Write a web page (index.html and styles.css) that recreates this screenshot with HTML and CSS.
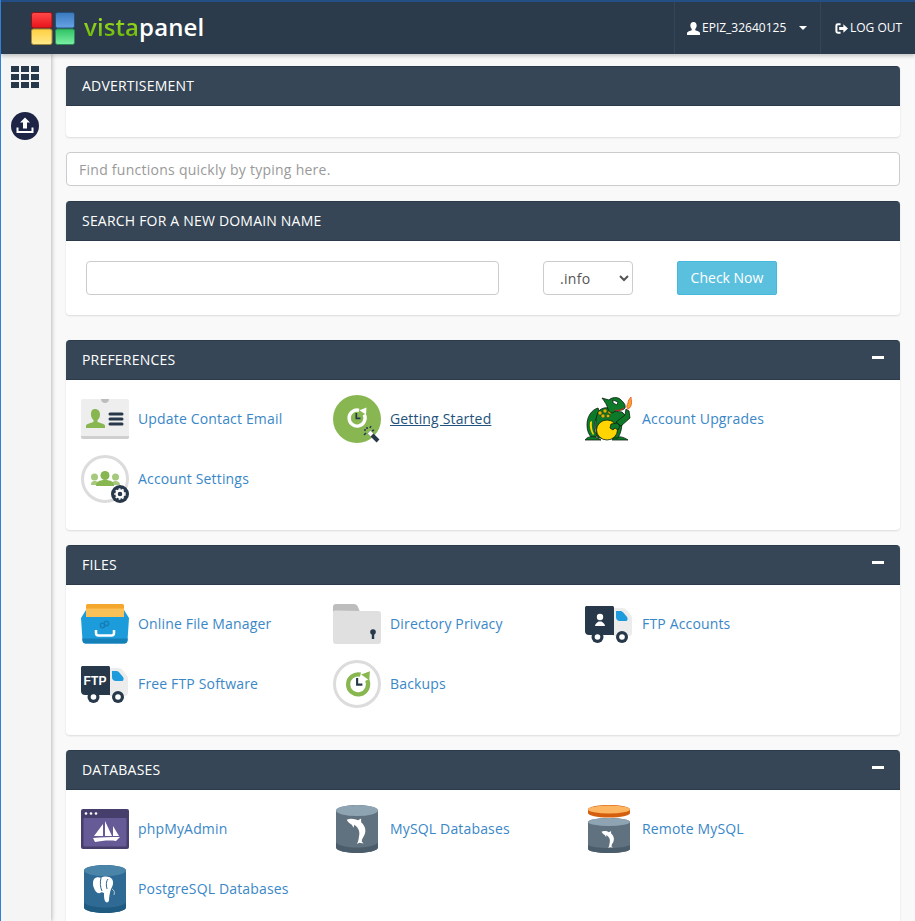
FILE: index.html
```html
<!DOCTYPE html>
<html lang="en">
<head>
<meta charset="utf-8">
<title>vistapanel</title>
<link rel="stylesheet" href="styles.css">
</head>
<body>
<svg class="defs" width="0" height="0" aria-hidden="true">
  <defs>
    <symbol id="clock" viewBox="0 0 24 24">
      <path d="M19.300 9.600A8 8 0 1 1 14 5.300" fill="none" stroke="currentColor" stroke-width="3.400"/>
      <path d="M14.500 5.200L21.500 2.500 21 9.800z" fill="currentColor"/>
      <path d="M11.300 8v5.300h4.200" fill="none" stroke="#27384a" stroke-width="1.700"/>
    </symbol>
    <symbol id="truck" viewBox="0 0 48 48">
      <path d="M28 8h9c2 0 3.500 .7 5 2.500l4 5c.7 1 1 2 1 3.500v14c0 2-1 3-3 3H28z" fill="#ececec"/>
      <path d="M31 11h4c1.500 0 2.500 .5 3.500 1.700l3.500 4.300c1 1.500 .6 4-1 4H35c-2.500 0-4-1.500-4-4z" fill="#1e9bdc"/>
      <path d="M2 6h25c1.500 0 2 .5 2 2v27H4c-2.500 0-4-1.500-4-4V8c0-1.500 .7-2 2-2z" fill="#27384a"/>
      <circle cx="12.500" cy="37" r="6" fill="#27384a"/><circle cx="12.500" cy="37" r="2.800" fill="#fff"/>
      <circle cx="37" cy="37" r="6" fill="#27384a"/><circle cx="37" cy="37" r="2.800" fill="#fff"/>
    </symbol>
    <symbol id="dolphin" viewBox="0 0 48 48">
      <path d="M6 9C12 6 20 8 24 10L29 7V13C35 18 38 26 34 34 32 38 30 40 30 44L33 47 26 46 22 48C25 44 25 38 26 33 27 27 24 21 18 17L17 22 14 17C11 15 8 13 6 9z" fill="#fff"/>
    </symbol>
    <symbol id="can" viewBox="0 0 42 48">
      <path d="M0 5.500C0 2.500 10 0 21 0s21 2.500 21 5.500v37C42 45.500 32 48 21 48S0 45.500 0 42.500z" fill="var(--side)"/>
      <ellipse cx="21" cy="5.500" rx="21" ry="5.500" fill="var(--top)"/>
      <path d="M0 37.500C3 41 11 42.500 21 42.500S39 41 42 37.500v5C42 45.500 32 48 21 48S0 45.500 0 42.500z" fill="var(--base)"/>
    </symbol>
  </defs>
</svg>

<header class="topbar">
  <div class="brand">
    <svg class="brand-mark" viewBox="0 0 44 33" aria-hidden="true">
      <defs>
        <linearGradient id="lr" x1="0" y1="0" x2="0" y2="1"><stop offset="0" stop-color="#ff4a4a"/><stop offset="1" stop-color="#e8121a"/></linearGradient>
        <linearGradient id="lb" x1="0" y1="0" x2="0" y2="1"><stop offset="0" stop-color="#3a78bc"/><stop offset="1" stop-color="#66a4e6"/></linearGradient>
        <linearGradient id="ly" x1="0" y1="0" x2="0" y2="1"><stop offset="0" stop-color="#ffcf3f"/><stop offset="1" stop-color="#ffea8c"/></linearGradient>
        <linearGradient id="lg" x1="0" y1="0" x2="0" y2="1"><stop offset="0" stop-color="#2fc263"/><stop offset="1" stop-color="#7cf0a4"/></linearGradient>
      </defs>
      <rect x=".5" y=".5" width="20.500" height="15.500" rx="2" fill="url(#lr)" stroke="#8c1418"/>
      <rect x="24.500" y=".5" width="19" height="15.500" rx="2" fill="url(#lb)" stroke="#23507f"/>
      <rect x=".5" y="17" width="20.500" height="15.500" rx="2" fill="url(#ly)" stroke="#a58a3a"/>
      <rect x="24.500" y="17" width="19" height="15.500" rx="2" fill="url(#lg)" stroke="#2b8a55"/>
    </svg>
    <span class="brand-name"><span class="brand-vista">vista</span>panel</span>
  </div>
  <nav class="topnav">
    <a class="topnav-item user-item">
      <svg class="top-icon" viewBox="0 0 14 14" aria-hidden="true"><path d="M7 0c2.300 0 3.400 1.700 3.400 3.800 0 1.500-.6 3-1.500 3.800v1.200c1.800.8 4.600 1.400 5.100 2.700V14H0v-2.500c.5-1.300 3.300-1.900 5.100-2.700V7.600C4.200 6.800 3.600 5.300 3.600 3.800 3.600 1.700 4.700 0 7 0z" fill="#fff"/></svg>
      <span>EPIZ_32640125</span>
      <span class="caret"></span>
    </a>
    <a class="topnav-item logout-item">
      <svg class="top-icon" viewBox="0 0 14 14" aria-hidden="true"><path d="M6 2.500H3C2 2.500 1.500 3 1.500 4v6c0 1 .5 1.500 1.500 1.500h3" fill="none" stroke="#fff" stroke-width="2.200"/><path d="M4.500 5.500h4.500V2.500L14 7l-5 4.500v-3H4.500z" fill="#fff"/></svg>
      <span>LOG OUT</span>
    </a>
  </nav>
</header>

<div class="shell">
  <aside class="sidebar">
    <svg class="side-grid" viewBox="0 0 28 22" aria-hidden="true">
      <g fill="#27384a">
        <rect x="0" y="0" width="8" height="6"/><rect x="10" y="0" width="8" height="6"/><rect x="20" y="0" width="8" height="6"/>
        <rect x="0" y="8" width="8" height="6"/><rect x="10" y="8" width="8" height="6"/><rect x="20" y="8" width="8" height="6"/>
        <rect x="0" y="16" width="8" height="6"/><rect x="10" y="16" width="8" height="6"/><rect x="20" y="16" width="8" height="6"/>
      </g>
    </svg>
    <svg class="side-upload" viewBox="0 0 28 28" aria-hidden="true">
      <circle cx="14" cy="14" r="14" fill="#1d2445"/>
      <path d="M14 5.500l5 5h-3v6h-4v-6H9z" fill="#fff"/>
      <path d="M6.500 15.500v4.500h15v-4.500" fill="none" stroke="#fff" stroke-width="2"/>
    </svg>
  </aside>

  <main class="content">
    <section class="panel">
      <div class="panel-head">ADVERTISEMENT</div>
      <div class="ad-body"></div>
    </section>

    <input class="finder" type="text" placeholder="Find functions quickly by typing here.">

    <section class="panel">
      <div class="panel-head">SEARCH FOR A NEW DOMAIN NAME</div>
      <form class="domain-form">
        <input class="domain-input" type="text">
        <select class="domain-tld"><option>.info</option></select>
        <button class="check-btn" type="button">Check Now</button>
      </form>
    </section>

    <section class="panel group">
      <div class="panel-head"><span>PREFERENCES</span><span class="minus"></span></div>
      <div class="items">
        <a class="item">
          <svg class="ico" viewBox="0 0 48 48" aria-hidden="true">
            <rect x="0" y="4" width="48" height="40" rx="2" fill="#eeeeee"/>
            <path d="M0 41h48v1c0 1.200-.8 2-2 2H2c-1.200 0-2-.8-2-2z" fill="#cfcfcf"/>
            <path d="M20 4h8c0 2-1.500 4-4 4s-4-2-4-4z" fill="#bdbdbd"/>
            <path d="M14 14c3 0 5 2.200 5 5.500 0 2.500-1 4.500-2.500 5.500v2c2.500 1 6.500 1.500 7.500 3.500V33H5v-2.500c1-2 5-2.500 7.500-3.500v-2C11 24 10 22 10 19.500c0-3.300 1-5.500 4-5.500z" fill="#88b651"/>
            <path d="M29 19h12M29 24h12M29 29h12" stroke="#27384a" stroke-width="3" stroke-linecap="round"/>
          </svg>
          <span>Update Contact Email</span>
        </a>
        <a class="item item-hover">
          <svg class="ico" viewBox="0 0 48 48" aria-hidden="true">
            <circle cx="24" cy="24" r="24" fill="#88b651"/>
            <use href="#clock" x="12" y="10" width="24" height="24" color="#fff"/>
            <path d="M36 37l9 9" stroke="#27384a" stroke-width="4"/>
            <path d="M36 37l3 3" stroke="#fff" stroke-width="4"/>
            <path d="M34 32v2M31 35h2M31 40l2-2M38 31l-1 2M41 35l-2 1" stroke="#27384a" stroke-width="1.500"/>
          </svg>
          <span>Getting Started</span>
        </a>
        <a class="item">
          <svg class="ico" viewBox="0 0 48 48" aria-hidden="true">
            <path d="M13 13C6 15 2 22 2 30 2 36 4 40 7 43L12 41C8 35 8 25 15 18z" fill="#0d7a2a" stroke="#0c1f0e" stroke-width=".8"/>
            <path d="M5 27c-.5 4 0 9 3 13l1-1C7 35 6.500 31 7 26z" fill="#ffd400"/>
            <path d="M0 45c2-3 6-4 10-3l6 3zM29 42c5-1 10 0 14 3H27z" fill="#0d7a2a" stroke="#0c1f0e" stroke-width=".8"/>
            <path d="M12 20C13 14 19 12 24 13L28 16 37 17C40 20 42 22 43 24L37 27C37 32 36 38 33 43H13C10 36 10 28 12 20z" fill="#0d7a2a" stroke="#0c1f0e" stroke-width=".8"/>
            <ellipse cx="22" cy="35" rx="10.500" ry="10" fill="#ffd400" stroke="#0c1f0e" stroke-width=".8"/>
            <g fill="#e0b400" stroke="#0c1f0e" stroke-width=".4"><circle cx="15" cy="18" r="2"/><circle cx="20" cy="16" r="2"/><circle cx="25" cy="17" r="2"/><circle cx="18" cy="21" r="2"/><circle cx="23" cy="21" r="1.800"/></g>
            <path d="M17 3L24 5C27 2 32 2 35 4 38 7 41 9 40 13 38 16 33 15 30 16 28 19 24 18 23 14 22 10 20 7 17 3z" fill="#0d7a2a" stroke="#0c1f0e" stroke-width=".8"/>
            <path d="M28 5l5 2-1 3-4-2z" fill="#fff" stroke="#0c1f0e" stroke-width=".8"/>
            <path d="M30 15c3 1 7 0 9-2" fill="none" stroke="#d8241c" stroke-width="1"/>
            <path d="M31 27L40 20 41 14 44 16 45 23 36 31z" fill="#0d7a2a" stroke="#0c1f0e" stroke-width=".8"/>
            <path d="M26 29l6-1 3 3-2 4-3-2-2 2-3-2z" fill="#0d7a2a" stroke="#0c1f0e" stroke-width=".8"/>
            <path d="M43 14c-2-2-1-4 0-6 0-2 1-4 3-6 0 2 .6 3 .6 5 0 3-1 6-3.600 7z" fill="#f5a623" stroke="#e8412a" stroke-width=".7"/>
          </svg>
          <span>Account Upgrades</span>
        </a>
        <a class="item">
          <svg class="ico" viewBox="0 0 48 48" aria-hidden="true">
            <circle cx="24" cy="24" r="22.500" fill="#fff" stroke="#dcdcdc" stroke-width="3"/>
            <g fill="#a6c97d">
              <circle cx="13.500" cy="22" r="3.500"/><path d="M10 30c0-3 1-4 3.500-4s5 1 5 4z"/>
              <circle cx="34.500" cy="22" r="3.500"/><path d="M30 30c0-3 2-4 4.500-4s4.500 1 4.500 4z"/>
            </g>
            <circle cx="24" cy="20.500" r="4.500" fill="#88b651"/>
            <path d="M15 31c0-4 3-6 9-6s9 2 9 6z" fill="#88b651"/>
            <circle cx="39" cy="39" r="9" fill="#27384a"/>
            <circle cx="39" cy="39" r="3.500" fill="none" stroke="#fff" stroke-width="2.400"/>
            <circle cx="39" cy="39" r="5" fill="none" stroke="#fff" stroke-width="1.400" stroke-dasharray="1.800 1.800"/>
          </svg>
          <span>Account Settings</span>
        </a>
      </div>
    </section>

    <section class="panel group">
      <div class="panel-head"><span>FILES</span><span class="minus"></span></div>
      <div class="items">
        <a class="item">
          <svg class="ico" viewBox="0 0 48 48" aria-hidden="true">
            <path d="M5 6c0-1 .6-2 2-2h34c1.400 0 2 1 2 2v12H5z" fill="#fac158"/>
            <path d="M7 4h34c1.400 0 2 1 2 2v2.500H5V6c0-1 .6-2 2-2z" fill="#f3a72d"/>
            <path d="M0 18L5 10V17H43V10L48 18 46.500 40.500C46.400 42.500 45 43.500 43.500 43.500H4.500C3 43.500 1.600 42.500 1.500 40.500z" fill="#1d9cdc"/>
            <path d="M1.200 38.500H46.800L46.500 40.500C46.400 42.500 45 43.500 43.500 43.500H4.500C3 43.500 1.600 42.500 1.500 40.500z" fill="#157fb8"/>
            <path d="M15 30v3c0 1.500 1 2.500 2.500 2.500h13c1.500 0 2.500-1 2.500-2.500v-3" fill="none" stroke="#fff" stroke-width="2.500"/>
            <circle cx="21.500" cy="25.500" r="2.200" fill="none" stroke="#157fb8" stroke-width="1.500"/>
            <circle cx="25.500" cy="23.500" r="2.200" fill="none" stroke="#157fb8" stroke-width="1.500"/>
          </svg>
          <span>Online File Manager</span>
        </a>
        <a class="item">
          <svg class="ico" viewBox="0 0 48 48" aria-hidden="true">
            <path d="M0 7c0-2 1-3 3-3h18c2 0 3 1 4 3l2 5H0z" fill="#bdbdbd"/>
            <path d="M0 13c0-2 1-2.500 3-2.500L27 11h18c2 0 3 1 3 3v27c0 2-1 3-3 3H3c-2 0-3-1-3-3z" fill="#e0e0e0"/>
            <circle cx="40" cy="32" r="2.800" fill="#27384a"/>
            <rect x="38.800" y="32" width="2.400" height="7" fill="#27384a"/>
          </svg>
          <span>Directory Privacy</span>
        </a>
        <a class="item">
          <svg class="ico" viewBox="0 0 48 48" aria-hidden="true">
            <use href="#truck" width="48" height="48"/>
            <circle cx="15" cy="17" r="3.200" fill="#fff"/>
            <path d="M10 26c0-2.500 2.500-3.500 3.500-4.500h3c1 1 3.500 2 3.500 4.500z" fill="#fff"/>
          </svg>
          <span>FTP Accounts</span>
        </a>
        <a class="item">
          <svg class="ico" viewBox="0 0 48 48" aria-hidden="true">
            <use href="#truck" width="48" height="48"/>
            <text class="ftp-label" x="2.500" y="25">FTP</text>
          </svg>
          <span>Free FTP Software</span>
        </a>
        <a class="item">
          <svg class="ico" viewBox="0 0 48 48" aria-hidden="true">
            <circle cx="24" cy="24" r="22.500" fill="#fff" stroke="#dcdcdc" stroke-width="3"/>
            <use href="#clock" x="10" y="8" width="30" height="30" color="#88b651"/>
          </svg>
          <span>Backups</span>
        </a>
      </div>
    </section>

    <section class="panel group">
      <div class="panel-head"><span>DATABASES</span><span class="minus"></span></div>
      <div class="items">
        <a class="item">
          <svg class="ico" viewBox="0 0 48 48" aria-hidden="true">
            <rect x="0" y="4" width="48" height="40" rx="2" fill="#463f6b"/>
            <rect x="2.500" y="13" width="43" height="28.500" rx="1" fill="#665a97"/>
            <circle cx="5" cy="8.500" r="1.300" fill="#fff"/><circle cx="10" cy="8.500" r="1.300" fill="#fff"/><circle cx="15" cy="8.500" r="1.300" fill="#fff"/>
            <path d="M13 31L22 19V31zM24 31V16L31 31zM32 31V21L38 31zM12 33C20 32 30 32 39 32L35 36C28 35 20 36 14 37z" fill="#fff"/>
          </svg>
          <span>phpMyAdmin</span>
        </a>
        <a class="item">
          <svg class="ico can-mysql" viewBox="0 0 48 48" aria-hidden="true">
            <use href="#can" x="3" width="42" height="48"/>
            <use href="#dolphin" x="10" y="9" width="30" height="30"/>
          </svg>
          <span>MySQL Databases</span>
        </a>
        <a class="item">
          <svg class="ico can-mysql" viewBox="0 0 48 48" aria-hidden="true">
            <path d="M3 4.500C3 2 12 0 24 0s21 2 21 4.500V8c0 2.500-9 4.500-21 4.500S3 10.500 3 8z" fill="#d45f0e"/>
            <ellipse cx="24" cy="4.500" rx="21" ry="4" fill="#fdb562"/>
            <path d="M3 17C3 14.800 12 13 24 13s21 1.800 21 4v27c0 2.200-9 4-21 4S3 46.200 3 44z" fill="#60717f"/>
            <ellipse cx="24" cy="17" rx="21" ry="4" fill="#8fa4b3"/>
            <path d="M3 40c3 2 11 3 21 3s18-1 21-3v4c0 2.200-9 4-21 4S3 46.200 3 44z" fill="#4b5d6b"/>
            <use href="#dolphin" x="14" y="23" width="20" height="20"/>
          </svg>
          <span>Remote MySQL</span>
        </a>
        <a class="item">
          <svg class="ico can-pg" viewBox="0 0 48 48" aria-hidden="true">
            <use href="#can" x="3" width="42" height="48"/>
            <path d="M12 18C12 13 16 11 20 13 23 11 28 11 31 14 33 17 32 21 30 24 29 27 28 32 28 35 28 37 26 38 25 37 23 36 23 31 23 28 21 27 20 27 19 28 16 29 14 26 13 23 12 21 12 20 12 18z" fill="#fff"/>
            <path d="M20 13C19 17 19 22 21 26M27 14C25 16 25 20 26 24" fill="none" stroke="#2d6a93" stroke-width="1"/>
            <path d="M31 24c2 1 3 3 2 6" fill="none" stroke="#cfe0ea" stroke-width=".8"/>
          </svg>
          <span>PostgreSQL Databases</span>
        </a>
      </div>
    </section>
  </main>
</div>
</body>
</html>
```

FILE: styles.css
```css
* {
  box-sizing: border-box;
}

html,
body {
  height: 100%;
  margin: 0;
  overflow: hidden;
}

body {
  display: flex;
  flex-direction: column;
  background: #f9f9f9;
  border-left: 1px solid #2f80d8;
  font-family: "Open Sans", sans-serif;
  font-size: 14px;
  line-height: 20px;
  color: #333;
}

.defs {
  display: block;
  height: 0;
}

.can-mysql {
  --side: #60717f;
  --top: #8fa4b3;
  --base: #4b5d6b;
}

.can-pg {
  --side: #2f6a94;
  --top: #4a85a9;
  --base: #1f5a80;
}

.topbar {
  flex: none;
  display: flex;
  justify-content: space-between;
  height: 54px;
  background: #2b3b4c;
  border-top: 2px solid #234f85;
  box-shadow: 0 2px 4px rgba(0, 0, 0, 0.22);
  position: relative;
  z-index: 2;
}

.brand {
  display: flex;
  align-items: center;
  padding-left: 30px;
}

.brand-mark {
  width: 44px;
  height: 33px;
  margin-top: 1px;
}

.brand-name {
  margin: 0 0 3px 9px;
  font-size: 24px;
  line-height: 32px;
  font-weight: 600;
  letter-spacing: 0.1px;
  color: #fff;
}

.brand-vista {
  background: linear-gradient(#b4ee2e, #5fae00);
  -webkit-background-clip: text;
  background-clip: text;
  color: transparent;
}

.topnav {
  display: flex;
}

.topnav-item {
  display: flex;
  align-items: center;
  height: 52px;
  border-left: 1px solid #34475a;
  color: #fff;
  font-size: 12px;
}

.user-item {
  width: 146px;
  padding-left: 12px;
}

.logout-item {
  width: 95px;
  padding-left: 14px;
}

.top-icon {
  width: 13px;
  height: 13px;
  margin-right: 2px;
}

.caret {
  width: 0;
  height: 0;
  margin-left: 13px;
  border-top: 4px solid #fff;
  border-left: 4px solid transparent;
  border-right: 4px solid transparent;
}

.shell {
  flex: 1;
  display: flex;
  min-height: 0;
}

.sidebar {
  flex: none;
  display: flex;
  flex-direction: column;
  align-items: center;
  width: 50px;
  background: #f5f5f5;
  box-shadow: 1px 0 4px rgba(0, 0, 0, 0.25);
  padding: 12px 2px 0 0;
}

.side-grid {
  width: 28px;
  height: 22px;
}

.side-upload {
  width: 28px;
  height: 28px;
  margin-top: 24px;
}

.content {
  flex: 1;
  display: flex;
  flex-direction: column;
  min-width: 0;
  padding: 12px 15px 0;
}

.panel {
  flex: none;
  background: #fff;
  border-radius: 4px;
  box-shadow: 0 1px 2px rgba(0, 0, 0, 0.12);
  margin-bottom: 15px;
}

.panel-head {
  display: flex;
  justify-content: space-between;
  align-items: center;
  height: 40px;
  padding: 0 16px;
  background: #364656;
  border-top: 1px solid #2b3b4c;
  border-bottom: 1px solid #2b3b4c;
  border-radius: 4px 4px 0 0;
  color: #fff;
  font-size: 14px;
  letter-spacing: 0.2px;
}

.minus {
  width: 12px;
  height: 3px;
  margin-bottom: 5px;
  background: #fff;
}

.ad-body {
  height: 31px;
}

.finder {
  flex: none;
  width: 100%;
  height: 34px;
  margin-bottom: 15px;
  padding: 6px 12px;
  background: #fff;
  border: 1px solid #ccc;
  border-radius: 4px;
  font: 14px/20px "Open Sans", sans-serif;
  letter-spacing: 0.26px;
  color: #555;
}

.finder::placeholder {
  color: #999;
  opacity: 1;
}

.domain-form {
  display: flex;
  gap: 44px;
  height: 74px;
  padding: 20px;
  margin: 0;
}

.domain-input {
  width: 413px;
  height: 34px;
  background: #fff;
  border: 1px solid #ccc;
  border-radius: 4px;
}

.domain-tld {
  width: 90px;
  height: 34px;
  padding: 6px 12px;
  background: #fff;
  border: 1px solid #ccc;
  border-radius: 4px;
  font: 14px/20px "Open Sans", sans-serif;
  letter-spacing: 0.3px;
  color: #555;
}

.check-btn {
  width: 100px;
  height: 34px;
  padding: 0;
  background: #5bc0de;
  border: 1px solid #46b8da;
  border-radius: 2px;
  font: 14px/20px "Open Sans", sans-serif;
  color: #fff;
}

.group {
  margin-bottom: 15px;
}

.group:nth-of-type(3) {
  margin-top: 10px;
}

.items {
  display: grid;
  grid-template-columns: repeat(3, 252px);
  grid-auto-rows: 60px;
  height: 150px;
  padding: 15px;
}

.item {
  display: flex;
  align-items: flex-start;
  gap: 9px;
  color: #3a87c8;
  letter-spacing: 0.16px;
}

.item span {
  margin-top: 14px;
}

.item-hover {
  color: #23527c;
}

.item-hover span {
  text-decoration: underline;
}

.ico {
  flex: none;
  width: 48px;
  height: 48px;
}

.ftp-label {
  font-family: "Liberation Sans", sans-serif;
  font-size: 12px;
  font-weight: 700;
  fill: #fff;
}
```
